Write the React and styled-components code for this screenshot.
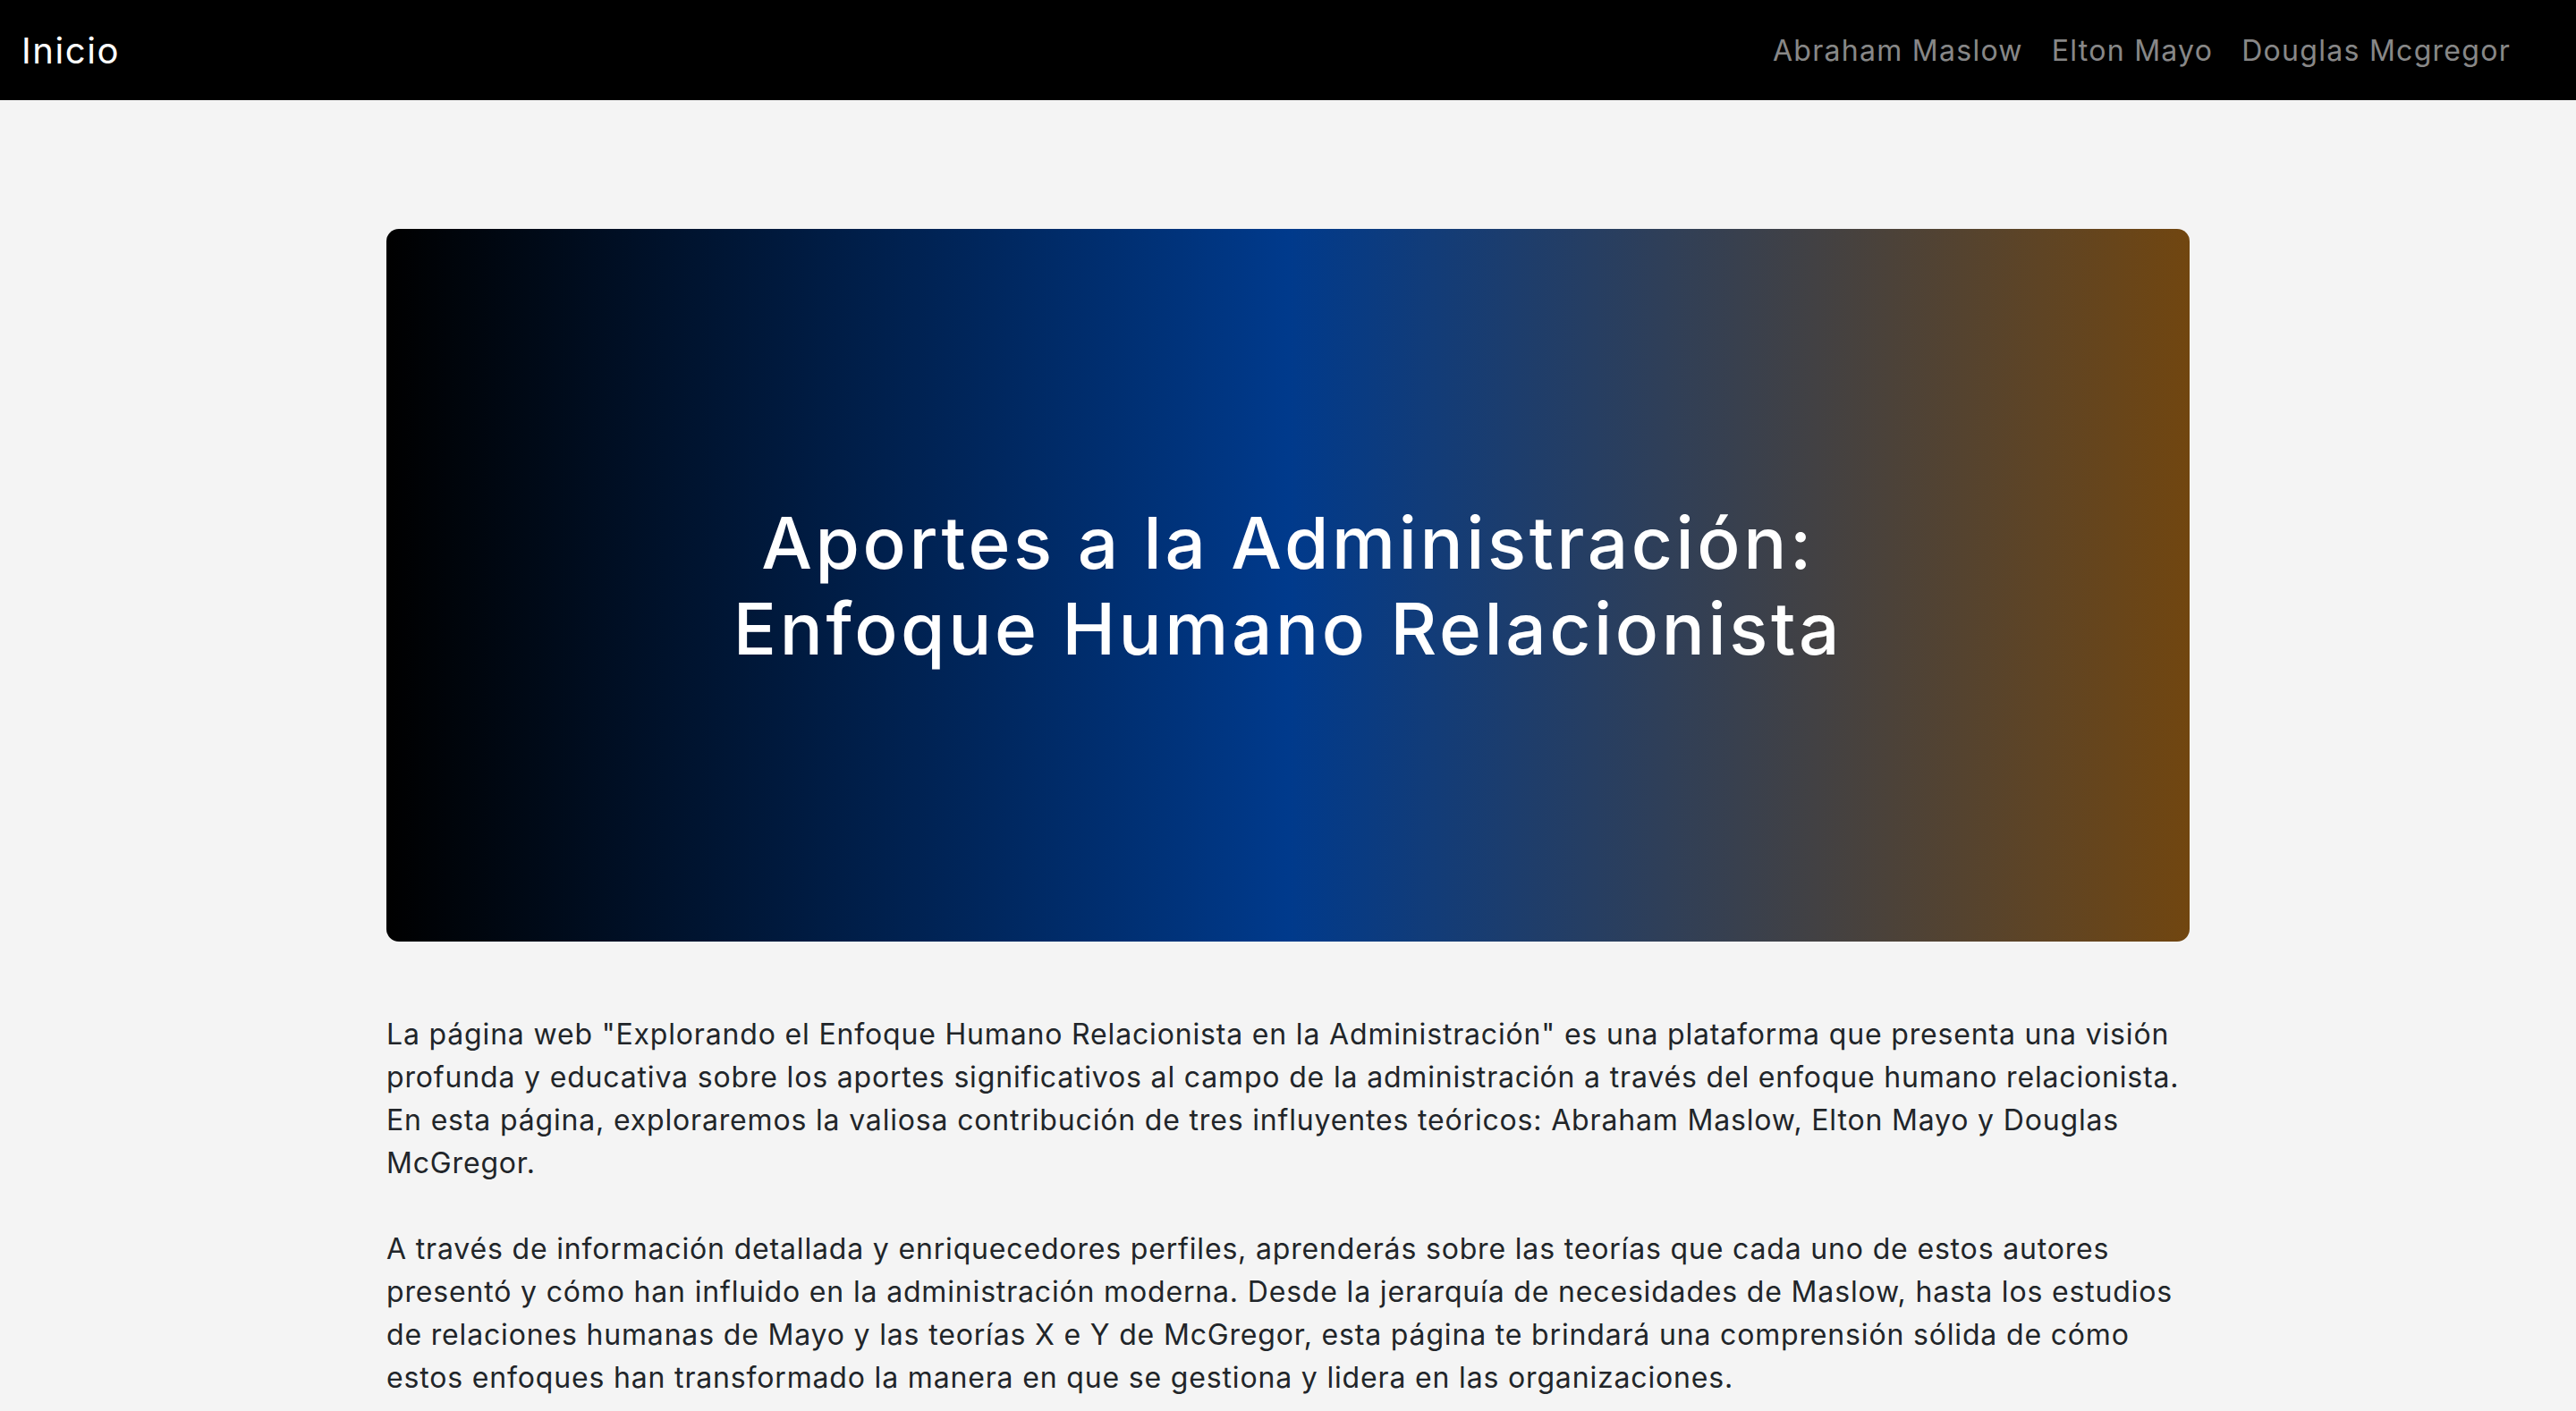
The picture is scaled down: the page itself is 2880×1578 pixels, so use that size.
import React from "react";
import styled, { createGlobalStyle } from "styled-components";

const GlobalStyle = createGlobalStyle`
  * {
    box-sizing: border-box;
  }

  body {
    margin: 0;
    background: #f4f4f4;
    font-family: "Inter", "Open Sans", sans-serif;
    color: #212529;
  }
`;

const Navbar = styled.nav`
  height: 112px;
  background: #000;
  display: flex;
  align-items: center;
  justify-content: space-between;
  padding: 0 57px 0 24px;
`;

const Brand = styled.a`
  color: #fff;
  font-size: 40px;
  font-weight: 400;
  text-decoration: none;
  letter-spacing: 0.04em;
`;

const NavList = styled.ul`
  display: flex;
  list-style: none;
  margin: 0;
  padding: 0;
`;

const NavLink = styled.a`
  display: block;
  padding: 8px 16px;
  color: rgba(255, 255, 255, 0.55);
  font-size: 32px;
  text-decoration: none;
  letter-spacing: 0.04em;
`;

const Main = styled.main`
  width: 70%;
  margin: 0 auto;
  padding-top: 144px;
`;

const Hero = styled.section`
  height: 797px;
  border-radius: 14px;
  background: linear-gradient(to right, #000000 0%, #003a8c 50%, #714610 100%);
  display: flex;
  align-items: center;
  justify-content: center;
`;

const Title = styled.h1`
  margin: 0;
  color: #fff;
  font-size: 80px;
  font-weight: 500;
  line-height: 1.2;
  text-align: center;
  letter-spacing: 0.045em;
`;

const Intro = styled.div`
  padding-top: 80px;
`;

const Paragraph = styled.p`
  margin: 0 0 48px;
  font-size: 32px;
  line-height: 48px;
  letter-spacing: 0.026em;
`;

const links = ["Abraham Maslow", "Elton Mayo", "Douglas Mcgregor"];

export default function App() {
  return (
    <>
      <GlobalStyle />
      <Navbar>
        <Brand href="#">Inicio</Brand>
        <NavList>
          {links.map((l) => (
            <li key={l}>
              <NavLink href="#">{l}</NavLink>
            </li>
          ))}
        </NavList>
      </Navbar>
      <Main>
        <Hero>
          <Title>
            Aportes a la Administración:
            <br />
            Enfoque Humano Relacionista
          </Title>
        </Hero>
        <Intro>
          <Paragraph>
            La página web "Explorando el Enfoque Humano Relacionista en la
            Administración" es una plataforma que presenta una visión profunda
            y educativa sobre los aportes significativos al campo de la
            administración a través del enfoque humano relacionista. En esta
            página, exploraremos la valiosa contribución de tres influyentes
            teóricos: Abraham Maslow, Elton Mayo y Douglas McGregor.
          </Paragraph>
          <Paragraph>
            A través de información detallada y enriquecedores perfiles,
            aprenderás sobre las teorías que cada uno de estos autores presentó
            y cómo han influido en la administración moderna. Desde la
            jerarquía de necesidades de Maslow, hasta los estudios de
            relaciones humanas de Mayo y las teorías X e Y de McGregor, esta
            página te brindará una comprensión sólida de cómo estos enfoques
            han transformado la manera en que se gestiona y lidera en las
            organizaciones.
          </Paragraph>
        </Intro>
      </Main>
    </>
  );
}
